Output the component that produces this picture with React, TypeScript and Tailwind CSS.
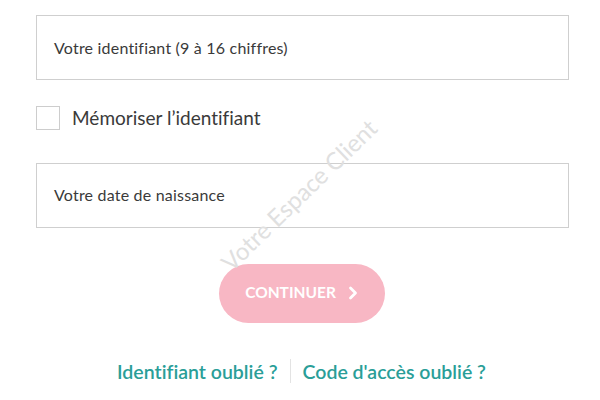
export default function App() {
  return (
    <main
      className="relative h-[400px] w-[600px] overflow-hidden bg-white [font-variant-ligatures:none]"
      style={{ fontFamily: 'Lato, "Open Sans", sans-serif' }}
    >
      <div className="flex flex-col pl-[36px] pt-[15px]">
        <div className="flex h-[65px] w-[533px] items-center border border-[#cfcfcf] px-[17px]">
          <span className="text-[16px] tracking-[0.2px] text-[#3a3a3a]">Votre identifiant (9 à 16 chiffres)</span>
        </div>

        <label className="mt-[24px] flex items-center gap-[12px]">
          <span className="h-[24px] w-[24px] border border-[#cdcdcd] bg-white" />
          <span className="text-[19px] text-[#3a3a3a]">Mémoriser l’identifiant</span>
        </label>

        <div className="mt-[30px] flex h-[65px] w-[533px] items-center border border-[#cfcfcf] px-[17px]">
          <span className="text-[16px] tracking-[0.2px] text-[#3a3a3a]">Votre date de naissance</span>
        </div>

        <div className="mt-[36px] flex w-[533px] justify-center pr-[2px]">
          <button className="flex h-[59px] w-[166px] items-center justify-center gap-[12px] rounded-full bg-[#f8b7c4] text-[15.5px] font-bold text-white">
            CONTINUER
            <svg width="10" height="14" viewBox="0 0 10 14" fill="none">
              <path d="M2.5 2l5 5-5 5" stroke="white" strokeWidth="2.8" strokeLinecap="round" strokeLinejoin="round" />
            </svg>
          </button>
        </div>

        <div className="mt-[34px] flex w-[533px] items-center justify-center pr-[2px] text-[19.5px] font-semibold text-[#2a9e98]">
          <span>Identifiant oublié ?</span>
          <span className="mx-[12px] h-[24px] w-px bg-[#e3e3e3]" />
          <span>Code d'accès oublié ?</span>
        </div>
      </div>

      <div className="pointer-events-none absolute left-[299px] top-[195px] -translate-x-1/2 -translate-y-1/2 -rotate-[44deg] whitespace-nowrap text-[24px] text-[#e0e0e0]">
        Votre Espace Client
      </div>
    </main>
  );
}
